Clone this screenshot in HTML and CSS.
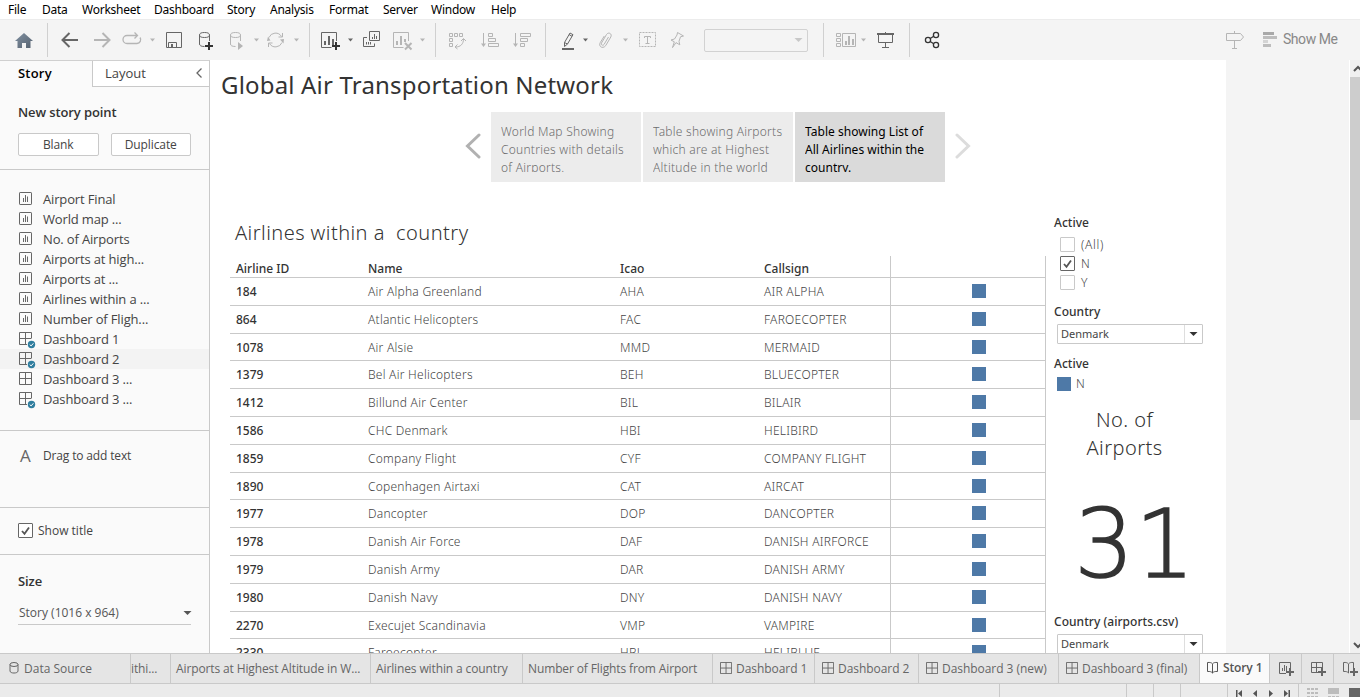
FILE: index.html
```html
<!DOCTYPE html>
<html lang="en">
<head>
<meta charset="utf-8">
<title>Global Air Transportation Network</title>
<link rel="stylesheet" href="styles.css">
</head>
<body>
<svg class="defs" width="0" height="0">
  <defs>
    <symbol id="sheet" viewBox="0 0 14 14"><rect x=".5" y=".5" width="12" height="12" rx=".6" fill="none" stroke="currentColor"/><path d="M4.500 6v4M6.500 3v7M8.500 4.500v5.500" stroke="currentColor" fill="none"/></symbol>
    <symbol id="dash" viewBox="0 0 14 14"><path d="M.5.5h12v12H.5zM6.500.5v12M.5 6.500h12" stroke="currentColor" fill="none"/></symbol>
    <symbol id="dashUsed" viewBox="0 0 18 18"><path d="M12.500 6V.5H.5v12H8M6.500.5v12M.5 6.500h12" stroke="currentColor" fill="none"/><circle cx="12.500" cy="12.500" r="3.700" fill="#2f7d9e"/><path d="M10.700 12.500l1.400 1.400 2.300-2.600" stroke="#fff" fill="none"/></symbol>
    <symbol id="book" viewBox="0 0 12 13"><path d="M.5 1.500C3 1.200 4.500 1.700 5.500 2.800 6.500 1.700 8 1.200 10.500 1.500v9C8 10.300 6.500 10.700 5.500 12 4.500 10.700 3 10.300.5 10.500zM5.500 3v9" fill="none" stroke="currentColor"/></symbol>
    <symbol id="caret" viewBox="0 0 9 6"><path d="M.5 1h8l-4 4z" fill="currentColor"/></symbol>
  </defs>
</svg>
<nav class="menu">
  <span>File</span><span>Data</span><span>Worksheet</span><span>Dashboard</span><span>Story</span><span>Analysis</span><span>Format</span><span>Server</span><span>Window</span><span>Help</span>
</nav>
<div class="toolbar">
  <svg width="48" height="40" viewBox="0 20 48 40"><defs><linearGradient id="hg" x2="1" y2="1"><stop stop-color="#8090a1"/><stop offset="1" stop-color="#566270"/></linearGradient></defs><path d="M24 33l9 8h-2.500v7H26v-5h-4v5h-4.500v-7H15z" fill="url(#hg)"/><path class="sep" d="M47.500 23v34"/></svg>
  <svg width="110" height="40" viewBox="48 20 110 40"><path class="dk w2" d="M78 40H63M69.500 33l-7 7 7 7"/><path class="lt w2" d="M94 40h15M102.500 33l7 7-7 7"/><path class="lt" d="M135 43.500h2a3.800 3.800 0 0 0 3-6M135 43.500h-8a4 4 0 0 1 0-8h10M134.500 32.500l3 3-3 3" stroke-width="1.300"/><path class="lf" d="M150 38.500h5l-2.500 3z"/></svg>
  <svg width="60" height="40" viewBox="158 20 60 40"><path class="dk" d="M166.500 32.500h15v15h-15zM168.500 47v-4.500h8V47"/><path class="df" d="M171 44h2v3h-2z"/><ellipse class="dk" cx="204.500" cy="35" rx="5" ry="2.500"/><path class="dk" d="M199.500 35v9c0 1.500 1.500 2.500 5 2.500M209.500 35v6"/><path class="blk w2" d="M209 42v8M205 46h8"/></svg>
  <svg width="92" height="40" viewBox="218 20 92 40"><ellipse class="lt" cx="235.500" cy="35" rx="5" ry="2.500"/><path class="lt" d="M230.500 35v9c0 1.500 1.500 2.500 5 2.500M240.500 35v6"/><path class="lf" d="M238 42l5 4-5 4zM254 38.500h5l-2.500 3zM294 38.500h5l-2.500 3zM267 41l3.500-.5-2.500-4zM284 39l-4 .5 3.500 4z"/><path class="lt" d="M269 37.500a7 7 0 0 1 12.500-1M282 42.500a7 7 0 0 1-12.500 1M282.500 33v4h-4M268.500 47v-4h4"/><path class="sep" d="M309.500 23v34"/></svg>
  <svg width="126" height="40" viewBox="310 20 126 40"><path class="dk" d="M336.500 41v-8.500h-15v15h10"/><path class="df" d="M324 41h2v4h-2zM328 36h2v9h-2zM332 39h2v6h-2zM348 38.500h5l-2.500 3z"/><path class="blk w2" d="M336 42v8M332 46h8"/><path class="dk" d="M369.500 31.500h10v9h-10zM367 37.500h-3.500v9h11v-3M366.500 42v2.500M368.500 42v2.500M370.500 42v2.500M372.500 37v2M374.500 34v5M376.500 36v3"/><path class="lt" d="M408.500 41v-8.500h-15v15h10"/><path class="lf" d="M396 41h2v4h-2zM400 36h2v9h-2zM404 39h2v3h-2zM420 38.500h5l-2.500 3z"/><path class="lt w2" d="M405 43l6.500 6.500M411.500 43l-6.500 6.500"/><path class="sep" d="M435.500 23v34"/></svg>
  <svg width="110" height="40" viewBox="436 20 110 40"><path class="lt" d="M449.500 33.500h3v3h-3zM454.500 33.500h3v3h-3zM459.500 33.500h3v3h-3zM449.500 38.500h3v3h-3zM449.500 43.500h3v3h-3zM455.500 47c5 0 8-3 8-8M461 41l2.500-2.500L466 41M457.500 44.500l-2.500 2.500 2.500 2M483.500 33v12M488.500 33.500h4v3h-4zM488.500 38.500h7v3h-7zM488.500 43.500h10v3h-10zM515.500 33v12M520.500 33.500h10v3h-10zM520.500 38.500h7v3h-7zM520.500 43.500h4v3h-4z"/><path class="lf" d="M481 43.500h5l-2.500 3.500zM513 43.500h5l-2.500 3.500z"/><path class="sep" d="M545.500 23v34"/></svg>
  <svg width="158" height="40" viewBox="546 20 158 40"><path class="dk" d="M564.500 46.500v-4l5.500-9.500 3 1.700-5.500 9.300zM564.500 42.500l3 1.500M569 34.500l3 1.800"/><path class="df" d="M562 48h12v2h-12zM583 38.500h5l-2.500 3z"/><path class="lt" d="M608.500 37l-4.500 7.500c-1 1.700-3.500.2-2.500-1.500l5-8.500c2-3 6-.7 4.300 2.500l-5 8.500c-3 4-7.800 1-5.500-3l4-6.500"/><path class="lf" d="M623 38.500h5l-2.500 3z"/><rect class="lt" x="639.500" y="32.500" width="16" height="14" stroke-dasharray="2 1"/><path class="lt" d="M644.500 38v-1.500h6V38M647.500 36.500v7M645.500 43.500h4"/><path class="lt" d="M677.500 32.500l6 3.500-3 .8-1.500 4.500.8 3.500-3.800-2.200-3.500 5 1.800-5.800-3.300-1.800 3.500-1 2.500-4z"/></svg>
  <div class="combo"><svg width="9" height="6"><use href="#caret"/></svg></div>
  <svg width="102" height="40" viewBox="808 20 102 40"><path class="sep" d="M823.500 23v34M909.500 23v34"/><path class="lt" d="M836.500 33.500h4v3h-4zM836.500 38.500h4v3h-4zM836.500 43.500h4v3h-4zM842.500 33.500h13v13h-13z"/><path class="lf" d="M845 41h2v4h-2zM848 36h2v9h-2zM852 39h2v6h-2zM861 38.500h5l-2.500 3z"/><path class="df" d="M877 33h17v2h-17zM885 32h1v1h-1z"/><path class="dk" d="M878.500 35v7.500h14V35M885.500 43v4M882 47.500h7"/></svg>
  <svg width="310" height="40" viewBox="910 20 310 40"><g class="blk" stroke-width="1.300"><circle cx="928" cy="40" r="2.600"/><circle cx="936" cy="35" r="2.600"/><circle cx="936" cy="45" r="2.600"/><path d="M930.200 38.500l3.500-2.200M930.200 41.500l3.500 2.200"/></g></svg>
  <svg width="63" height="40" viewBox="1220 20 63 40"><path class="lt" d="M1226.500 33.500h14l3 3.500-3 3.500h-14zM1234.500 31v2M1234.500 41v7M1232 48.500h5"/><path fill="#a9a9a9" d="M1263 32h11v3h-11z"/><path fill="#bdbdbd" d="M1263 36h14v3h-14zM1263 44h8v3h-8z"/><path fill="#d4d4d4" d="M1263 40h5v3h-5z"/></svg>
  <span class="showme">Show Me</span>
</div>
<main>
  <aside>
    <div class="panes"><b>Story</b><div class="layout"><span>Layout</span><svg width="8" height="12"><path d="M6.500 1.500l-4.500 4.500 4.500 4.500" class="dk" stroke-width="1.300"/></svg></div></div>
    <section class="new"><h3>New story point</h3><div class="btns"><button>Blank</button><button>Duplicate</button></div></section>
    <section class="list">
      <div><svg><use href="#sheet" width="14" height="14"/></svg>Airport Final</div>
      <div><svg><use href="#sheet" width="14" height="14"/></svg>World map ...</div>
      <div><svg><use href="#sheet" width="14" height="14"/></svg>No. of Airports</div>
      <div><svg><use href="#sheet" width="14" height="14"/></svg>Airports at high...</div>
      <div><svg><use href="#sheet" width="14" height="14"/></svg>Airports at ...</div>
      <div><svg><use href="#sheet" width="14" height="14"/></svg>Airlines within a ...</div>
      <div><svg><use href="#sheet" width="14" height="14"/></svg>Number of Fligh...</div>
      <div><svg><use href="#dashUsed" width="18" height="18"/></svg>Dashboard 1</div>
      <div class="on"><svg><use href="#dashUsed" width="18" height="18"/></svg>Dashboard 2</div>
      <div><svg><use href="#dash" width="14" height="14"/></svg>Dashboard 3 ...</div>
      <div><svg><use href="#dashUsed" width="18" height="18"/></svg>Dashboard 3 ...</div>
    </section>
    <section class="drag"><span class="bigA">A</span><span>Drag to add text</span></section>
    <section class="show"><span class="check on"><svg width="15" height="15"><path d="M4 8l2.500 2.800L11 4.500"/></svg></span><span>Show title</span></section>
    <section class="size"><h3>Size</h3><div class="pick"><span>Story (1016 x 964)</span><svg width="9" height="6"><use href="#caret"/></svg></div></section>
  </aside>
  <div class="canvas">
    <h1>Global Air Transportation Network</h1>
    <div class="points">
      <svg width="16" height="26"><path d="M14 2L2.500 13 14 24" stroke="#b1b1b1"/></svg>
      <div class="pt"><p>World Map Showing<br>Countries with details<br>of Airports.</p></div>
      <div class="pt"><p>Table showing Airports<br>which are at Highest<br>Altitude in the world</p></div>
      <div class="pt cur"><p>Table showing List of<br>All Airlines within the<br>country.</p></div>
      <svg width="16" height="26"><path d="M2 2l11.500 11L2 24" stroke="#dcdcdc"/></svg>
    </div>
    <div class="board">
      <div class="viz">
        <h2>Airlines within a&nbsp; country</h2>
        <div class="table">
          <div class="row head"><b>Airline ID</b><b>Name</b><b>Icao</b><b>Callsign</b><i></i></div>
          <div class="row"><b>184</b><span>Air Alpha Greenland</span><span>AHA</span><span>AIR ALPHA</span><i><u></u></i></div>
          <div class="row"><b>864</b><span>Atlantic Helicopters</span><span>FAC</span><span>FAROECOPTER</span><i><u></u></i></div>
          <div class="row"><b>1078</b><span>Air Alsie</span><span>MMD</span><span>MERMAID</span><i><u></u></i></div>
          <div class="row"><b>1379</b><span>Bel Air Helicopters</span><span>BEH</span><span>BLUECOPTER</span><i><u></u></i></div>
          <div class="row"><b>1412</b><span>Billund Air Center</span><span>BIL</span><span>BILAIR</span><i><u></u></i></div>
          <div class="row"><b>1586</b><span>CHC Denmark</span><span>HBI</span><span>HELIBIRD</span><i><u></u></i></div>
          <div class="row"><b>1859</b><span>Company Flight</span><span>CYF</span><span>COMPANY FLIGHT</span><i><u></u></i></div>
          <div class="row"><b>1890</b><span>Copenhagen Airtaxi</span><span>CAT</span><span>AIRCAT</span><i><u></u></i></div>
          <div class="row"><b>1977</b><span>Dancopter</span><span>DOP</span><span>DANCOPTER</span><i><u></u></i></div>
          <div class="row"><b>1978</b><span>Danish Air Force</span><span>DAF</span><span>DANISH AIRFORCE</span><i><u></u></i></div>
          <div class="row"><b>1979</b><span>Danish Army</span><span>DAR</span><span>DANISH ARMY</span><i><u></u></i></div>
          <div class="row"><b>1980</b><span>Danish Navy</span><span>DNY</span><span>DANISH NAVY</span><i><u></u></i></div>
          <div class="row"><b>2270</b><span>Execujet Scandinavia</span><span>VMP</span><span>VAMPIRE</span><i><u></u></i></div>
          <div class="row"><b>2330</b><span>Faroecopter</span><span>HBL</span><span>HELIBLUE</span><i><u></u></i></div>
        </div>
      </div>
      <div class="filters">
        <h4>Active</h4>
        <div class="opts">
          <label><span class="check"></span>(All)</label>
          <label><span class="check on"><svg width="15" height="15"><path d="M4 8l2.500 2.800L11 4.500"/></svg></span>N</label>
          <label><span class="check"></span>Y</label>
        </div>
        <h4 class="ctry">Country</h4>
        <div class="drop"><span>Denmark</span><i><svg width="9" height="6"><use href="#caret"/></svg></i></div>
        <h4 class="leg">Active</h4>
        <div class="legend"><u></u>N</div>
        <div class="kpiTitle">No. of<br>Airports</div>
        <div class="kpi">31</div>
        <h4 class="csv">Country (airports.csv)</h4>
        <div class="drop"><span>Denmark</span><i><svg width="9" height="6"><use href="#caret"/></svg></i></div>
      </div>
    </div>
  </div>
  <div class="gutter"></div>
  <div class="scroll">
    <svg width="10" height="17"><path d="M4 11l4-4 4 4" /></svg><div class="thumb"></div><svg class="dn" width="10" height="17"><path d="M4 7l4 4 4-4"/></svg>
  </div>
</main>
<div class="tabs">
  <div class="t0"><svg width="10" height="12"><ellipse cx="5" cy="2.500" rx="4" ry="2" class="dk"/><path class="dk" d="M1 2.500v6.500c0 2.700 8 2.700 8 0V2.500"/></svg>Data Source</div>
  <div class="t1">ithi...</div>
  <div class="t2">Airports at Highest Altitude in W...</div>
  <div class="t3">Airlines within a country</div>
  <div class="t4">Number of Flights from Airport</div>
  <div class="t5"><svg width="12" height="12"><use href="#dash" width="13" height="13"/></svg>Dashboard 1</div>
  <div class="t6"><svg width="12" height="12"><use href="#dash" width="13" height="13"/></svg>Dashboard 2</div>
  <div class="t7"><svg width="12" height="12"><use href="#dash" width="13" height="13"/></svg>Dashboard 3 (new)</div>
  <div class="t8"><svg width="12" height="12"><use href="#dash" width="13" height="13"/></svg>Dashboard 3 (final)</div>
  <div class="t9"><svg width="12" height="13"><use href="#book" width="12" height="13"/></svg>Story 1</div>
  <div class="t10"><svg width="16" height="16"><path class="dk" d="M11.500 7V1.500H.5v11H7M3.500 7v3M5.500 4v6M7.500 5v5"/><path class="dk w2" d="M11 7v8M7 11h8"/></svg></div>
  <div class="t11"><svg width="16" height="16"><path class="dk" d="M11.500 7V1.500H.5v10H7M5.500 1.500v10M.5 6.500h11"/><path class="dk w2" d="M11 7v8M7 11h8"/></svg></div>
  <div class="t12"><svg width="16" height="16"><path class="dk" d="M10.500 7V1.500C8 1.200 6.500 1.700 5.500 3 4.500 1.700 3 1.200.5 1.500v9c2.500-.2 4 .2 5 1.500V3"/><path class="dk w2" d="M11 7v8M7 11h8"/></svg></div>
</div>
<footer><div class="s1"></div><div class="s2"></div><div class="s3"></div><div class="s4"></div><div class="s5"></div>
  <div class="s6"><svg width="71" height="13" viewBox="1228 684 71 13"><path fill="#555" d="M1236 690h1.500v7h-1.500zM1242 690v7l-4-3.500zM1257 690v7l-4-3.500zM1269 690v7l4-3.500zM1284 690v7l4-3.500zM1288.500 690h1.500v7h-1.500z"/></svg></div>
  <svg width="61" height="13" viewBox="1299 684 61 13"><path fill="#bcbcbc" d="M1307 688h3v2h-3zM1311 688h3v2h-3zM1315 688h3v2h-3zM1307 692h3v2h-3zM1311 692h3v2h-3zM1315 692h3v2h-3zM1307 696h3v1h-3zM1311 696h3v1h-3zM1315 696h3v1h-3zM1328 688h11v6h-11zM1328 696h3v1h-3zM1332 696h3v1h-3zM1336 696h3v1h-3z"/><path fill="#666" d="M1349 688h11v9h-11z"/></svg>
</footer>
</body>
</html>
```
FILE: styles.css
```css
* { box-sizing: border-box; }
body { margin: 0; width: 1360px; height: 697px; overflow: hidden; display: flex; flex-direction: column; background: #fff; color: #444; font: 13px "Open Sans", "Noto Sans", sans-serif; }
h1, h2, h3, h4, p { margin: 0; }
svg { display: block; flex: none; }
u { text-decoration: none; }
i { font-style: normal; }
.defs { position: absolute; }
.dk { stroke: #666; fill: none; }
.lt { stroke: #b5b5b5; fill: none; }
.blk { stroke: #333; fill: none; }
.df { fill: #666; }
.lf { fill: #b5b5b5; }
.w2 { stroke-width: 2; }
.sep { stroke: #d0d0d0; fill: none; }
.menu { flex: none; height: 19px; display: grid; grid-template-columns: 34px 40px 72px 73px 43px 59px 54px 48px 60px 40px; padding-left: 8px; font: 12px/20px "Noto Sans", sans-serif; letter-spacing: -.25px; color: #000; }
.toolbar { flex: none; height: 41px; background: #f4f4f4; border-top: 1px solid #ececec; display: flex; align-items: center; }
.combo { width: 104px; height: 23px; border: 1px solid #d2d2d2; border-radius: 2px; display: flex; align-items: center; justify-content: flex-end; padding-right: 4px; color: #c8c8c8; }
.showme { font: 14px/38px Roboto, sans-serif; color: #888; letter-spacing: -.45px; margin-bottom: 2px; }
main { height: 593px; flex: none; display: flex; overflow: hidden; }
aside { width: 210px; flex: none; background: #fafafa; border-right: 1px solid #c9c9c9; border-top: 1px solid #d0d0d0; }
.panes { height: 26px; display: flex; line-height: 24px; }
.panes b { width: 92px; padding-left: 18px; color: #000; font-weight: 600; letter-spacing: .2px; }
.layout { flex: 1; display: flex; justify-content: space-between; align-items: center; border-left: 1px solid #c9c9c9; border-bottom: 1px solid #c9c9c9; padding: 0 6px 2px 12px; background: #fff; }
section { border-bottom: 1px solid #c9c9c9; }
h3 { font-size: 13px; font-weight: 600; color: #333; line-height: 18px; letter-spacing: -.1px; }
.new { height: 83px; padding: 16px 18px 0; }
.btns { display: flex; gap: 12px; margin-top: 12px; }
button { width: 81px; height: 23px; padding: 0 0 1px; border: 1px solid #c9c9c9; border-radius: 2px; background: #fff; color: #444; font: 12px "Open Sans", sans-serif; letter-spacing: -.1px; }
.list { height: 261px; padding-top: 19px; font-size: 13px; line-height: 20px; letter-spacing: -.15px; }
.list div { height: 20px; display: flex; padding-left: 19px; }
.list svg { width: 18px; height: 18px; margin: 3px 6px 0 0; color: #666; }
.list .on { background: #f3f3f3; }
.drag { height: 77px; display: flex; padding: 15px 0 0 20px; line-height: 20px; font-size: 12px; letter-spacing: -.15px; }
.bigA { width: 23px; font: 17px/20px "Open Sans", sans-serif; color: #666; }
.show { height: 47px; display: flex; align-items: center; gap: 5px; padding: 0 0 1px 18px; font-size: 12px; }
.check { width: 15px; height: 15px; flex: none; border: 1px solid #c9c9c9; border-radius: 1px; background: #fff; }
.check.on { border-color: #666; }
.check svg { margin: -1px; }
.check path { fill: none; stroke: #555; stroke-width: 1.8; }
.size { border: 0; padding: 17px 18px; }
.pick { height: 26px; margin-top: 9px; line-height: 26px; border-bottom: 1px solid #c9c9c9; display: flex; justify-content: space-between; align-items: center; font-size: 12px; padding: 2px 0 0 1px; color: #555; }
.pick svg { margin-right: -1px; }
.canvas { width: 1016px; flex: none; background: #fff; font-family: "Noto Sans", sans-serif; }
h1 { height: 52px; padding-left: 11px; font-weight: 400; font-size: 24px; line-height: 50px; letter-spacing: .18px; color: #333; }
.points { height: 70px; display: flex; align-items: center; padding-left: 255px; }
.points path { fill: none; stroke-width: 3; stroke-linecap: round; }
.points > svg { margin-bottom: 2px; }
.points > svg:first-child { margin-right: 10px; }
.points > svg:last-child { margin-left: 8px; }
.pt { width: 150px; height: 70px; background: #ececec; padding: 11px 0 0 10px; margin-right: 2px; }
.pt p { height: 49px; overflow: hidden; font-size: 12px; font-weight: 300; letter-spacing: .25px; line-height: 18px; color: #6c6c6c; white-space: nowrap; }
.pt.cur { background: #dadada; }
.pt.cur p { color: #000; font-weight: 400; letter-spacing: .03px; }
.board { display: flex; padding: 33px 0 0 20px; }
.viz { width: 816px; }
h2 { height: 41px; padding-left: 5px; font-weight: 300; font-size: 20px; line-height: 36px; letter-spacing: .45px; color: #333; }
.row { height: 27.8px; display: grid; grid-template-columns: 132px 252px 144px 132px 156px; border-bottom: 1px solid #c9c9c9; padding-left: 0; line-height: 27px; font-size: 12px; color: #444; }
.row > b, .row > span { padding-left: 6px; font-weight: 300; letter-spacing: .25px; }
.row > b { color: #333; font-weight: 500; letter-spacing: 0; }
.row > i { border-left: 1px solid #c9c9c9; border-right: 1px solid #c9c9c9; display: flex; justify-content: center; padding: 6px 0 0 22px; }
.row u { width: 14px; height: 14px; background: #4e79a7; }
.head { height: 22px; line-height: 25px; }
.filters { width: 180px; padding-left: 8px; font-size: 12px; }
h4 { font-size: 12px; font-weight: 500; line-height: 16px; height: 16px; color: #333; letter-spacing: .04px; }
.opts { padding: 4px 0 0 6px; }
.opts label { display: flex; gap: 6px; height: 19px; align-items: center; color: #444; font-weight: 300; letter-spacing: .7px; }
.ctry { margin-top: 12px; }
.drop { width: 146px; height: 20px; margin: 4px 0 0 3px; border: 1px solid #c9c9c9; border-radius: 1px; display: flex; justify-content: space-between; line-height: 18px; font-size: 11px; color: #444; padding-left: 3px; }
.drop i { width: 18px; border-left: 1px solid #dedede; display: flex; align-items: center; justify-content: center; color: #333; }
.leg { margin-top: 12px; }
.legend { display: flex; align-items: center; gap: 5px; padding-left: 3px; height: 23px; color: #444; font-weight: 300; }
.legend u { width: 14px; height: 14px; background: #4e79a7; }
.kpiTitle { width: 141px; margin-top: 11px; text-align: center; font-size: 20px; line-height: 28px; font-weight: 300; letter-spacing: .45px; color: #333; }
.kpi { width: 162px; height: 152px; text-align: center; font-family: "DejaVu Sans", "DejaVu Sans Light", sans-serif; font-size: 94px; line-height: 166px; font-weight: 200; letter-spacing: 1px; color: #333; -webkit-text-stroke: 1.5px #333; }
.gutter { width: 123px; background: #f4f4f4; }
.scroll { width: 11px; border-left: 1px solid #fff; background: #f0f0f0; }
.scroll svg path { fill: none; stroke: #555; stroke-width: 2; }
.thumb { height: 343px; background: #cdcdcd; margin-bottom: 216px; }
.tabs { height: 31px; flex: none; display: flex; background: #e5e5e5; border-top: 1px solid #c9c9c9; border-bottom: 1px solid #c9c9c9; font-size: 12px; color: #666; letter-spacing: -.12px; }
.tabs div { flex: none; display: flex; align-items: center; gap: 5px; border-right: 1px solid #c9c9c9; padding-left: 5px; white-space: nowrap; overflow: hidden; }
.tabs svg { margin-bottom: 2px; }
.tabs .t0 { width: 131px; padding-left: 9px; letter-spacing: 0; }
.tabs .t1 { width: 40px; padding-left: 0; }
.tabs .t2 { width: 200px; }
.tabs .t3 { width: 152px; }
.tabs .t4 { width: 190px; }
.tabs .t5, .tabs .t6, .tabs .t7, .tabs .t8 { padding-left: 7px; gap: 4px; letter-spacing: -.05px; }
.tabs .t5 { width: 102px; }
.tabs .t6 { width: 104px; }
.tabs .t7 { width: 140px; }
.tabs .t8 { width: 141px; }
.tabs .t9 { width: 70px; padding: 0 0 2px 7px; gap: 4px; background: #fafafa; font-weight: 600; color: #555; }
.tabs .t9 svg { margin: 0; }
.tabs .t10, .tabs .t11, .tabs .t12 { width: 32px; padding-left: 9px; }
.tabs .t10 svg, .tabs .t11 svg, .tabs .t12 svg { margin: 0; }
footer { height: 13px; flex: none; display: flex; background: #ebebeb; }
footer div { border-right: 1px solid #c9c9c9; }
.s1 { width: 1000px; }
.s2 { width: 127px; }
.s3 { width: 27px; }
.s4 { width: 27px; }
.s5 { width: 47px; }
.s6 { width: 71px; }
```
